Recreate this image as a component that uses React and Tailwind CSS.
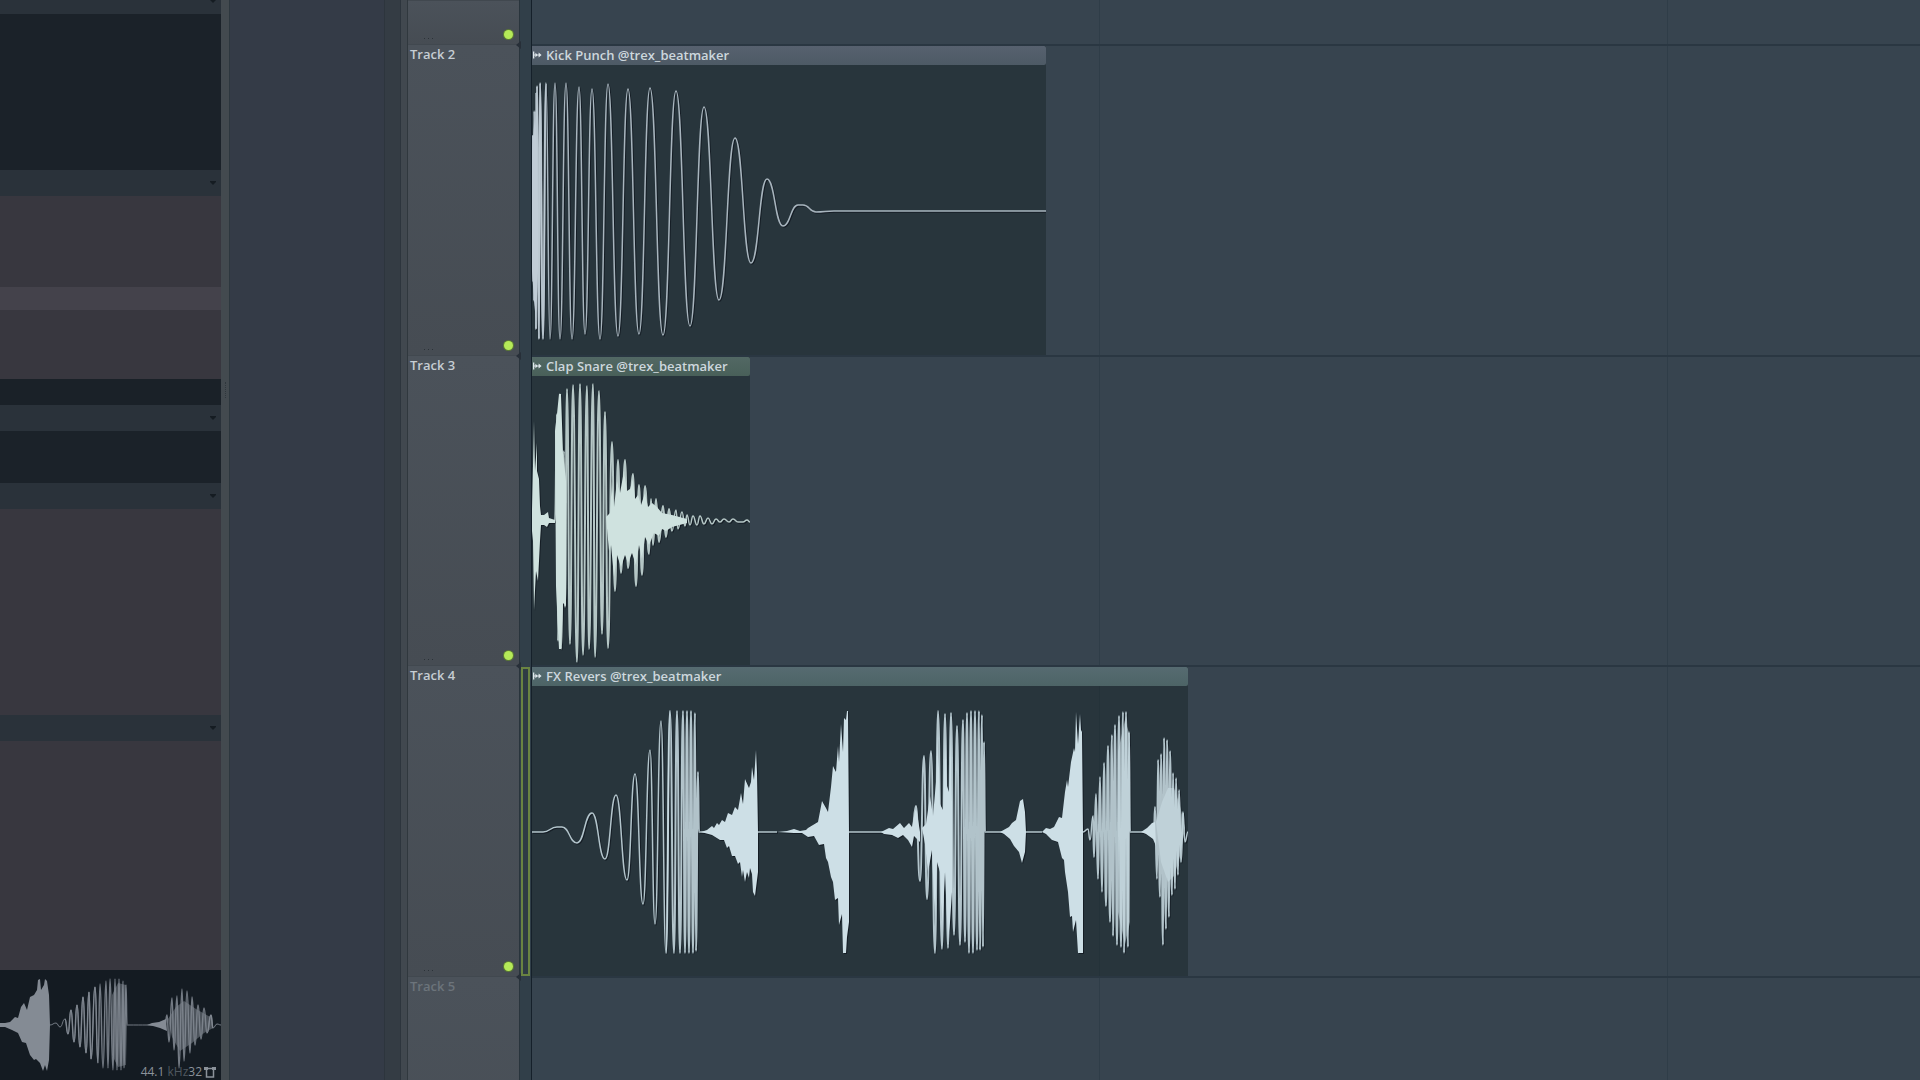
import { clsx } from "clsx";

/* Wave data: points are [x, y] in px, y measured from the zero line.
   "swings" are turning points of a single oscillation, "dense" ones are drawn thicker,
   "solids" are closed shapes and "bodies" are closed shapes seen between the swings. */

const KICK = {
  swings: [
    [
      [0, 0], [1, -75], [1, 70], [2, -100], [3, 90], [4, -118], [4, 118], [5, -125], [7, 128], [8, -128], [11, 128],
      [14, -128], [18, 128], [23, -128], [28, 128], [34, -128], [40, 128], [47, -124], [53, 123], [60, -122], [68, 128],
      [76, -127], [86, 125], [96, -122], [107, 123], [118, -123], [131, 124], [144, -120], [158, 115], [172, -104],
      [187, 89], [203, -73], [219, 52], [235, -32], [251, 15], [266, -6], [271, -6], [284, 1], [302, 0], [514, 0],
    ],
  ],
  dense: [
    [[1, 0], [1, -75], [2, 90], [3, -100], [4, 118], [5, -125], [7, 128], [8, -128], [11, 128], [14, -128]],
  ],
  solids: [
    [[-1, 0], [1, -72], [3, -98], [5, -60], [6, 0], [6, 60], [4, 110], [2, 90], [0, 60]],
  ],
  bodies: [],
};

const CLAP = {
  swings: [
    [
      [140, 10], [144, -11], [146, 8], [150, -9], [153, 5], [155, -6], [158, 4], [161, -5], [165, 4], [168, -5],
      [172, 3], [176, -3], [180, 3], [184, -2], [188, 1], [192, -2], [197, 1], [201, -2], [206, 1], [211, 1], [215, -1], [218, 1],
    ],
  ],
  dense: [
    [
      [23, 0], [25, -107], [26, 120], [28, -127], [29, 128], [32, -70], [33, 86], [35, -132], [38, 123], [41, -136],
      [45, 141], [48, -137], [51, 134], [55, -135], [57, 128], [61, -137], [63, 136], [67, -130], [70, 113], [73, -109],
      [76, 127], [80, -79], [83, 70], [86, -61], [89, 52], [93, -61], [96, 47], [101, -47], [104, 65], [107, -36],
      [110, 54], [113, -35], [117, 33], [119, -22], [121, 24], [124, -22], [127, 21], [131, -15], [134, 16], [137, -12],
      [140, 10],
    ],
  ],
  solids: [
    [
      [-1, 0], [0, -12], [2, -100], [3, -50], [5, -78], [5, -50], [7, -42], [8, -15], [9, -6], [12, -6], [16, -9],
      [17, -3], [23, -1], [23, 2], [17, 2], [15, 6], [12, 4], [9, 4], [8, 20], [6, 60], [4, 50], [2, 89], [1, 20],
    ],
    [
      [23, -90], [25, -107], [27, -127], [29, -127], [31, -68], [34, -40], [34, 85], [31, 82], [29, 128], [27, 128], [24, 65],
    ],
    [
      [74, -4], [78, -8], [80, -40], [82, -14], [85, -40], [88, -28], [92, -50], [95, -30], [98, -32], [101, -42], [103, -22],
      [106, -26], [109, -16], [113, -28], [116, -14], [120, -18], [125, -14], [130, -8], [140, -6], [155, -2],
      [155, 2], [140, 6], [134, 10], [130, 8], [127, 15], [122, 12], [117, 24], [113, 16], [110, 38], [107, 24], [104, 44],
      [100, 32], [96, 42], [93, 34], [89, 46], [85, 34], [82, 56], [79, 24], [77, 30],
    ],
  ],
  bodies: [],
};

const FX = {
  swings: [
    [
      [0, 0], [11, 0], [25, -5], [30, -5], [45, 11], [60, -19], [73, 27], [84, -37], [95, 48], [103, -58], [111, 72],
      [118, -82], [123, 92], [129, -111], [134, 121], [138, -121],
    ],
    [[167, 0], [245, 0]],
    [[317, 0], [380, 0]],
    [[453, 0], [510, 0]],
    [[551, 0], [556, -3], [558, 8], [561, -16]],
    [[598, 0], [612, 0]],
    [[651, -20], [653, 10], [656, 0]],
  ],
  dense: [
    [
      [134, 121], [138, -121], [142, 121], [145, -121], [148, 121], [151, -121], [153, 121], [155, -121], [157, 121],
      [159, -121], [161, 121], [163, -119], [164, 119], [166, -60], [167, 0],
    ],
    [
      [380, 0], [384, -26], [388, 49], [392, -76], [395, 67], [399, -81], [403, 121], [406, -121], [410, 117],
      [413, -118], [416, 116], [419, -119], [422, 103], [425, -106], [428, 113], [431, -112], [433, 110], [435, -119],
      [437, 121], [439, -121], [441, 121], [443, -121], [445, 118], [447, -121], [448, 118], [450, -117], [451, 115],
      [452, -90], [453, 0],
    ],
    [
      [561, -16], [562, 25], [564, -38], [566, 47], [568, -55], [570, 60], [572, -69], [574, 74], [576, -86], [578, 90],
      [580, -97], [581, 104], [583, -107], [585, 113], [587, -116], [589, 115], [591, -120], [592, 121], [594, -120],
      [596, 115], [597, -100], [598, 0],
    ],
    [
      [622, 0], [623, -25], [625, 47], [626, -72], [628, 65], [629, -78], [631, 113], [632, -94], [634, 97], [635, -92],
      [637, 85], [638, -81], [640, 63], [641, -59], [643, 57], [644, -54], [646, 43], [647, -42], [649, 30], [651, -20],
    ],
  ],
  solids: [
    [
      [169, 0], [175, -2], [180, -6], [182, -4], [185, -9], [187, -7], [190, -12], [193, -10], [196, -19], [200, -17],
      [203, -25], [206, -22], [209, -39], [211, -28], [213, -53], [217, -44], [219, -50], [220, -65], [222, -52],
      [224, -82], [225, -60], [226, 0], [226, 40], [223, 64], [221, 60], [220, 42], [218, 36], [217, 46], [215, 40],
      [213, 50], [211, 38], [210, 45], [208, 30], [206, 32], [203, 24], [200, 24], [197, 14], [195, 16], [192, 8],
      [188, 8], [180, 3],
    ],
    [
      [245, 0], [255, -1], [262, -3], [268, -1], [274, -2], [276, -4], [281, -7], [286, -10], [290, -31], [294, -24],
      [296, -20], [299, -45], [301, -66], [304, -60], [306, -86], [307, -70], [309, -108], [311, -80], [312, -114],
      [314, -112], [315, -121], [316, -121], [317, 0], [317, 90], [315, 105], [314, 121], [311, 121], [310, 82],
      [307, 93], [306, 66], [303, 68], [301, 50], [299, 45], [296, 30], [294, 26], [292, 12], [287, 13], [282, 4],
      [276, 5], [270, 1], [262, 1],
    ],
    [
      [349, 0], [357, -4], [361, -3], [368, -9], [372, -4], [377, -9], [380, -5], [384, -26], [388, 0], [388, 10],
      [382, 4], [380, 15], [376, 8], [371, 3], [366, 6], [360, 3], [352, 2],
    ],
    [
      [390, -4], [394, -8], [398, -36], [401, -16], [404, -50], [406, -100], [408, -28], [411, -22], [413, -96],
      [415, -46], [417, -40], [419, -100], [420, -30], [420, 60], [418, 90], [416, 108], [413, 40], [410, 100], [408, 40],
      [405, 30], [403, 90], [400, 18], [396, 40], [393, 12],
    ],
    [
      [468, 0], [477, -5], [480, -9], [484, -12], [488, -31], [491, -33], [493, -20], [494, 0], [493, 20], [490, 31],
      [487, 20], [482, 14], [478, 7], [472, 2],
    ],
    [
      [510, 0], [514, -4], [518, -3], [522, -5], [527, -15], [530, -14], [533, -40], [535, -52], [536, -45], [539, -70],
      [542, -84], [543, -80], [544, -120], [546, -88], [548, -118], [549, -102], [550, -100], [551, 0], [551, 121],
      [546, 121], [544, 88], [541, 100], [540, 84], [538, 85], [536, 60], [533, 40], [532, 28], [530, 26], [526, 10],
      [520, 8], [514, 2],
    ],
    [[609, 0], [615, -4], [620, -9], [623, -10], [624, 14], [621, 7], [614, 2]],
  ],
  bodies: [
    [[586, -80], [593, -112], [598, -96], [598, 90], [593, 112], [586, 80]],
    [[624, -10], [630, -30], [636, -44], [642, -44], [648, -26], [653, -4], [648, 24], [642, 44], [636, 50], [629, 30]],
  ],
};

const PREVIEW = {
  swings: [
    [
      [50, 0], [56, -2], [60, 2], [65, -6], [68, 9], [71, -15], [74, 17], [77, -20], [80, 22], [83, -28], [86, 28],
      [89, -33], [91, 34], [95, -38], [98, 38],
    ],
    [[127, 0], [165, 0]],
    [[207, 8], [211, -10], [213, 3], [217, -1], [221, 0]],
  ],
  dense: [
    [
      [65, -6], [68, 9], [71, -15], [74, 17], [77, -20], [80, 22], [83, -28], [86, 28], [89, -33], [91, 34],
      [95, -38], [98, 38], [100, -41], [103, 43], [106, -44], [108, 43], [110, -46], [113, 45], [115, -46], [117, 45],
      [119, -46], [121, 45], [123, -44], [124, 43], [126, -40], [127, 0],
    ],
    [
      [165, 0], [167, -10], [169, 17], [172, -27], [174, 25], [177, -29], [179, 43], [182, -36], [184, 36], [187, -34],
      [190, 28], [192, -28], [195, 20], [198, -20], [201, 14], [204, -17], [207, 8], [211, -10], [213, 3],
    ],
  ],
  solids: [
    [
      [0, -2], [5, -2], [10, -3], [15, -8], [18, -7], [21, -18], [24, -22], [27, -15], [30, -28], [34, -30], [37, -35],
      [38, -45], [40, -46], [41, -35], [44, -40], [45, -46], [47, -44], [49, -30], [50, 0], [49, 35], [47, 46], [45, 40],
      [43, 46], [40, 38], [36, 34], [34, 35], [30, 30], [26, 18], [22, 17], [18, 8], [12, 5], [5, 2], [0, 2],
    ],
    [[147, 0], [152, -2], [159, -3], [166, -6], [167, 6], [160, 3], [153, 1]],
  ],
  bodies: [
    [[112, -30], [118, -42], [126, -40], [127, 0], [126, 40], [118, 42], [112, 30]],
    [[168, -6], [176, -18], [184, -24], [196, -16], [212, -7], [213, 3], [204, 8], [192, 18], [180, 26], [172, 12]],
  ],
};

const CLIPS = {
  kick: {
    name: "Kick Punch @trex_beatmaker",
    wave: KICK,
    width: "w-[514px]",
    size: 514,
    bar: "bg-linear-to-b from-[#57616f] to-[#4d5a65]",
    color: "text-[#c0ccd6]",
  },
  clap: {
    name: "Clap Snare @trex_beatmaker",
    wave: CLAP,
    width: "w-[218px]",
    size: 218,
    bar: "bg-linear-to-b from-[#526864] to-[#496059]",
    color: "text-[#cfe2df]",
  },
  fx: {
    name: "FX Revers @trex_beatmaker",
    wave: FX,
    width: "w-[656px]",
    size: 656,
    bar: "bg-linear-to-b from-[#566b71] to-[#4d6466]",
    color: "text-[#cddfe6]",
  },
};

const TRACKS = [
  { id: 1, height: "h-[44px]" },
  { id: 2, height: "h-[311px]", clip: CLIPS.kick },
  { id: 3, height: "h-[310px]", clip: CLIPS.clap },
  { id: 4, height: "h-[311px]", clip: CLIPS.fx, selected: true },
  { id: 5, height: "h-[310px]", muted: true },
];

function swingPath(points) {
  return points
    .map(([x, y], i) => {
      if (i === 0) return `M${x} ${y}`;
      const [px, py] = points[i - 1];
      const mid = (px + x) / 2;
      return `C${mid} ${py} ${mid} ${y} ${x} ${y}`;
    })
    .join("");
}

const shapePath = (shapes) => shapes.map((s) => `M${s.map((p) => p.join(" ")).join("L")}Z`).join("");

function Waveform({ wave, size, half, thin = 1.5, thick = 2, shadow = true, className }) {
  const lines = wave.swings.map(swingPath).join("");
  const dense = wave.dense.map(swingPath).join("");
  const solids = shapePath(wave.solids);
  return (
    <svg
      viewBox={`0 ${-half} ${size} ${half * 2}`}
      width={size}
      height={half * 2}
      className={clsx("block max-w-none shrink-0", className)}
      aria-hidden="true"
    >
      {shadow && (
        <g transform="translate(1 1)" className="text-[#111820]" opacity="0.8">
          <path d={lines + dense} fill="none" stroke="currentColor" strokeWidth={thin} />
          <path d={solids} fill="currentColor" />
        </g>
      )}
      <path d={shapePath(wave.bodies)} fill="currentColor" opacity="0.5" />
      <path d={lines} fill="none" stroke="currentColor" strokeWidth={thin} strokeLinejoin="round" opacity="0.85" />
      <path d={dense} fill="none" stroke="currentColor" strokeWidth={thick} strokeLinejoin="round" opacity="0.85" />
      <path d={solids} fill="currentColor" />
    </svg>
  );
}

function ClipIcon() {
  return (
    <svg viewBox="0 0 9 8" className="h-2 w-[9px] shrink-0 text-[#dfe7ec]" fill="currentColor" aria-hidden="true">
      <path d="M0 0.5h1.3v7H0zM1 3.4h7v1.2H1zM2.4 1.8L5 4 2.4 6.2zM5.6 1.6L8.6 4 5.6 6.4z" />
    </svg>
  );
}

function Clip({ clip }) {
  return (
    <article className={clsx("flex h-full flex-col bg-[#1e2b31]/60", clip.width)}>
      <header className={clsx("flex h-[19px] items-center gap-1 rounded-r-xs pb-px pl-px", clip.bar)}>
        <ClipIcon />
        <h2 className="text-[13px] leading-none font-semibold whitespace-nowrap text-[#cdd7dd]">{clip.name}</h2>
      </header>
      <div className="flex flex-1 items-center pt-px">
        <Waveform wave={clip.wave} size={clip.size} half={144} className={clip.color} />
      </div>
    </article>
  );
}

function TrackHead({ track }) {
  return (
    <div
      className={clsx(
        "flex shrink-0 flex-col justify-between border-t border-[#41484f] bg-linear-to-b from-[#4b525a] to-[#464c53]",
        track.height,
      )}
    >
      {track.id > 1 ? (
        <h2
          className={clsx(
            "pt-[2px] pl-[2px] text-[13px] leading-[14px] font-semibold",
            track.muted ? "text-[#6c747b]" : "text-[#c6cdd3]",
          )}
        >
          Track {track.id}
        </h2>
      ) : (
        <span />
      )}
      <div className="flex items-end justify-between pr-[6px] pb-[5px] pl-4">
        <div className="flex gap-[3px]">
          <i className="size-px bg-[#2b3238]" />
          <i className="size-px bg-[#2b3238]" />
          <i className="size-px bg-[#2b3238]" />
        </div>
        <button
          type="button"
          aria-label={`Mute track ${track.id}`}
          className="size-[9px] rounded-full bg-[#b5ea58] shadow-[0_0_0_1px_#5c7a35]"
        />
      </div>
    </div>
  );
}

function TrackGutter({ track }) {
  return (
    <div className={clsx("relative shrink-0", track.height, track.selected && "px-px pt-[2px]")}>
      {track.id > 1 && (
        <svg viewBox="0 0 5 8" className="absolute -top-[3px] -left-1 h-2 w-[5px] text-[#272f38]" fill="currentColor" aria-hidden="true">
          <path d="M5 0v8L0 4z" />
        </svg>
      )}
      {track.selected && <div className="h-full border-2 border-[#6a8442] bg-[#2f3c44]" />}
    </div>
  );
}

function Lane({ track }) {
  return (
    <div className={clsx("shrink-0", track.height, track.id > 1 && "border-t-2 border-[#2a3742]")}>
      {track.clip && <Clip clip={track.clip} />}
    </div>
  );
}

function PanelHeader({ className }) {
  return (
    <div className={clsx("flex h-[26px] shrink-0 items-center justify-end bg-[#2a323a] pr-[5px]", className)}>
      <button type="button" aria-label="Panel options" className="text-[#151c22]">
        <svg viewBox="0 0 6 4" className="block h-1 w-1.5" fill="currentColor" aria-hidden="true">
          <path d="M0 0h6v1L3 4 0 1z" />
        </svg>
      </button>
    </div>
  );
}

function Browser() {
  return (
    <aside className="flex w-[221px] shrink-0 flex-col overflow-hidden bg-[#38373f]">
      <PanelHeader className="-mt-3" />
      <div className="h-[156px] shrink-0 bg-[#1b2229]" />
      <PanelHeader />
      <div className="h-[91px] shrink-0" />
      <div className="h-[23px] shrink-0 bg-[#44424b]" />
      <div className="h-[69px] shrink-0" />
      <div className="h-[26px] shrink-0 bg-[#1a2128]" />
      <PanelHeader />
      <div className="h-[52px] shrink-0 bg-[#1b2229]" />
      <PanelHeader />
      <div className="h-[206px] shrink-0" />
      <PanelHeader />
      <div className="flex-1" />
      <div className="relative h-[110px] shrink-0 bg-[#141b22] pt-px">
        <Waveform wave={PREVIEW} size={221} half={54} thin={1} thick={1.5} shadow={false} className="text-[#848b94]" />
        <p className="absolute right-[5px] bottom-0 flex items-center text-[12px] leading-4 text-[#8b929a]">
          44.1&nbsp;<span className="text-[#4f575f]">kHz</span>32
          <svg viewBox="0 0 12 12" className="ml-0.5 size-3" fill="none" stroke="currentColor" strokeWidth="1.5" aria-hidden="true">
            <path d="M2.5 2.5h7v8.5h-7z" />
            <path d="M0 1h4v3H0zM8 1h4v3H8z" fill="currentColor" stroke="none" />
          </svg>
        </p>
      </div>
    </aside>
  );
}

export default function App() {
  return (
    <main className="flex h-screen overflow-hidden bg-[#343b47] font-['Open_Sans','Noto_Sans',sans-serif]">
      <Browser />
      <div className="flex w-[9px] shrink-0 flex-col items-center justify-start border-r border-[#2d373e] bg-[#434a4f] pt-[382px]">
        <i className="h-4 border-l border-dotted border-[#2f373d]" />
      </div>
      <div className="w-[154px] shrink-0" />
      <div className="w-[17px] shrink-0 border-x border-[#2d353d] bg-[#343c44]" />
      <div className="w-[7px] shrink-0 border-r border-[#30383e] bg-[#41484f]" />
      <div className="flex w-[111px] shrink-0 flex-col">
        {TRACKS.map((t) => (
          <TrackHead key={t.id} track={t} />
        ))}
      </div>
      <div className="flex w-[13px] shrink-0 flex-col border-r border-l border-r-[#15202a] border-l-[#29343c] bg-[#313f49]">
        {TRACKS.map((t) => (
          <TrackGutter key={t.id} track={t} />
        ))}
      </div>
      <section className="flex min-w-0 flex-1 flex-col bg-[#37444f] bg-[repeating-linear-gradient(90deg,transparent_0_567px,#2f3d48_567px_568px)]">
        {TRACKS.map((t) => (
          <Lane key={t.id} track={t} />
        ))}
      </section>
    </main>
  );
}
